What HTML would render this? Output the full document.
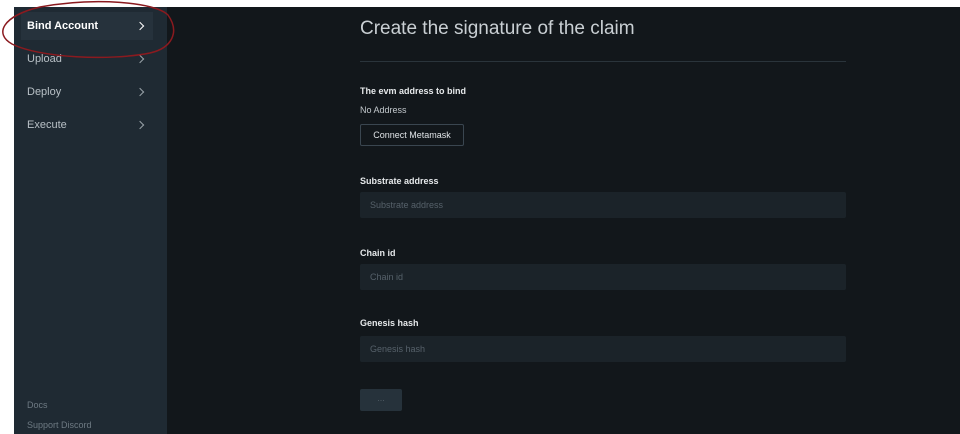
<!DOCTYPE html>
<html><head><style>
*{margin:0;padding:0;box-sizing:border-box}
body{width:960px;height:434px;background:#fff;position:relative;overflow:hidden;font-family:"Liberation Sans",sans-serif}
#side{position:absolute;left:14px;top:7px;width:153px;height:427px;background:#1f2a33}
#main{position:absolute;left:167px;top:7px;width:793px;height:427px;background:#12171b}
.nav{position:absolute;left:13px;font-size:11px;color:#b8c0c6}
.chev{position:absolute;left:123px;width:6px;height:6px;border-right:1.5px solid #9aa3a9;border-top:1.5px solid #9aa3a9;transform:rotate(45deg)}
.t{position:absolute;left:193px;color:#e6e9eb;font-size:9px;font-weight:bold}
.inp{position:absolute;left:193px;width:486px;height:26px;background:#1b2329;color:#56616a;font-size:9px;padding:8px 10px;border-radius:2px}
</style></head><body>
<div id="side">
<div style="position:absolute;left:7px;top:5px;width:132px;height:28px;background:#26323c"></div>
<div class="nav" style="top:13px;color:#fff;font-weight:bold">Bind Account</div><div class="chev" style="top:16px;border-color:#fff"></div>
<div class="nav" style="top:46px">Upload</div><div class="chev" style="top:49px"></div>
<div class="nav" style="top:79px">Deploy</div><div class="chev" style="top:82px"></div>
<div class="nav" style="top:112px">Execute</div><div class="chev" style="top:115px"></div>
<div class="nav" style="top:393px;font-size:9px;color:#6e7a83">Docs</div>
<div class="nav" style="top:413px;font-size:9px;color:#6e7a83">Support Discord</div>
</div>
<div id="main">
<div style="position:absolute;left:193px;top:11px;font-size:19px;color:#c9cfd3">Create the signature of the claim</div>
<div style="position:absolute;left:193px;top:54px;width:486px;height:1px;background:#2a343b"></div>
<div class="t" style="top:79px">The evm address to bind</div>
<div style="position:absolute;left:193px;top:98px;font-size:9px;color:#c3c9cd">No Address</div>
<div style="position:absolute;left:193px;top:117px;width:104px;height:22px;border:1px solid #3a4650;border-radius:2px;color:#dfe3e6;font-size:9px;text-align:center;line-height:20px">Connect Metamask</div>
<div class="t" style="top:169px">Substrate address</div>
<div class="inp" style="top:185px">Substrate address</div>
<div class="t" style="top:241px">Chain id</div>
<div class="inp" style="top:257px">Chain id</div>
<div class="t" style="top:311px">Genesis hash</div>
<div class="inp" style="top:329px">Genesis hash</div>
<div style="position:absolute;left:193px;top:382px;width:42px;height:22px;background:#26323b;border-radius:2px;color:#5a666f;font-size:8px;text-align:center;line-height:20px">…</div>
</div>
<svg style="position:absolute;left:0;top:0" width="200" height="70"><path d="M40 7 C95 -3 155 2 168 15 C180 32 172 48 150 53 C110 61 40 58 12 44 C-6 34 2 16 40 7 Z" fill="none" stroke="#8b1a1f" stroke-width="1.5"/></svg>
</body></html>
